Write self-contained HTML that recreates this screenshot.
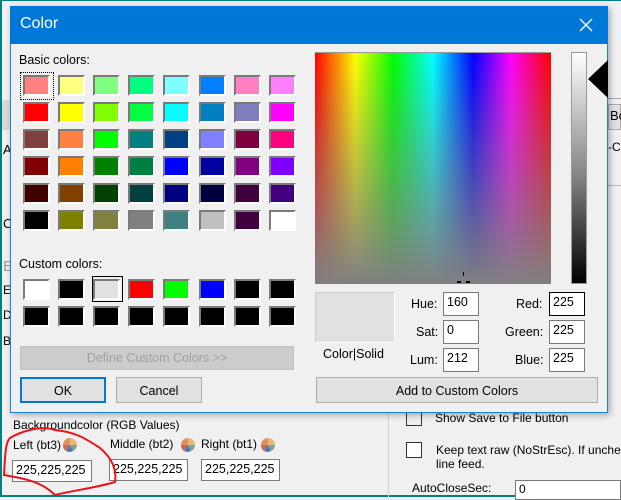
<!DOCTYPE html>
<html><head><style>
*{margin:0;padding:0;box-sizing:border-box}
body{width:621px;height:497px;overflow:hidden;background:#f0f0f0;font-family:"Liberation Sans",sans-serif;position:relative;font-size:12px;color:#000}
.a{position:absolute}
.sw{position:absolute;width:27px;height:21px;border:2px solid;border-color:#7a7a7a #fff #fff #7a7a7a}
.lbl{position:absolute;font-size:12px}
.inp{position:absolute;background:#fff;border:1px solid #7a7a7a;font-size:12.5px;padding:2px 0 0 3px}
.btn{position:absolute;background:#e1e1e1;border:1px solid #adadad;text-align:center;font-size:12.5px}
</style></head><body>
<div class="a" style="left:0;top:0;width:621px;height:497px;border:2px solid #008080;border-top:1px solid #008080;border-right:none"></div>
<div class="a" style="left:2px;top:100px;width:8px;height:30px;background:#d8d8d8"></div>
<div class="a" style="left:3px;top:142px;font-size:13px">A</div>
<div class="a" style="left:3px;top:216px;font-size:13px">C</div>
<div class="a" style="left:3px;top:258px;font-size:15px;color:#999">E</div>
<div class="a" style="left:3px;top:283px;font-size:12px">E</div>
<div class="a" style="left:3px;top:308px;font-size:12px">D</div>
<div class="a" style="left:3px;top:334px;font-size:12px">B</div>
<div class="a" style="left:608px;top:98px;width:13px;height:1px;background:#aaa"></div>
<div class="a" style="left:608px;top:104px;width:13px;height:26px;background:#e1e1e1;border:1px solid #adadad;font-size:13px;padding:3px 0 0 1px">Bo</div>
<div class="a" style="left:608px;top:140px;font-size:12px">-C</div>
<div class="a" style="left:608px;top:185px;width:13px;height:1px;background:#bbb"></div>
<div class="a" style="left:388px;top:412px;width:1px;height:85px;background:#d0d0d0"></div>
<div class="a" style="left:406px;top:410px;width:16px;height:16px;border:1px solid #333;background:#eee"></div>
<div class="lbl" style="left:435px;top:411px">Show Save to File button</div>
<div class="a" style="left:406px;top:442px;width:16px;height:16px;border:1px solid #333;background:#fff"></div>
<div class="lbl" style="left:436px;top:443px;white-space:nowrap">Keep text raw (NoStrEsc). If unche</div>
<div class="lbl" style="left:436px;top:457px">line feed.</div>
<div class="lbl" style="left:412px;top:481px">AutoCloseSec:</div>
<div class="a" style="left:515px;top:480px;width:106px;height:20px;background:#fff;border:1px solid #7a7a7a;font-size:12px;padding:1px 3px">0</div>
<div class="lbl" style="left:13px;top:418px">Backgroundcolor (RGB Values)</div>
<div class="lbl" style="left:13px;top:438px">Left (bt3)</div>
<div class="lbl" style="left:110px;top:437px">Middle (bt2)</div>
<div class="lbl" style="left:201px;top:437px">Right (bt1)</div>
<svg class="a" style="left:62px;top:437px" width="16" height="16" viewBox="0 0 16 16"><path d="M8 8L8 1A7 7 0 0 1 15 8Z" fill="#e8b878"/><path d="M8 8L15 8A7 7 0 0 1 11 14Z" fill="#7aa888"/><path d="M8 8L11 14A7 7 0 0 1 4 14Z" fill="#4a78b8"/><path d="M8 8L4 14A7 7 0 0 1 1 8Z" fill="#d06848"/><path d="M8 8L1 8A7 7 0 0 1 8 1Z" fill="#e09060"/></svg>
<svg class="a" style="left:180px;top:437px" width="16" height="16" viewBox="0 0 16 16"><path d="M8 8L8 1A7 7 0 0 1 15 8Z" fill="#e8b878"/><path d="M8 8L15 8A7 7 0 0 1 11 14Z" fill="#7aa888"/><path d="M8 8L11 14A7 7 0 0 1 4 14Z" fill="#4a78b8"/><path d="M8 8L4 14A7 7 0 0 1 1 8Z" fill="#d06848"/><path d="M8 8L1 8A7 7 0 0 1 8 1Z" fill="#e09060"/></svg>
<svg class="a" style="left:260px;top:437px" width="16" height="16" viewBox="0 0 16 16"><path d="M8 8L8 1A7 7 0 0 1 15 8Z" fill="#e8b878"/><path d="M8 8L15 8A7 7 0 0 1 11 14Z" fill="#7aa888"/><path d="M8 8L11 14A7 7 0 0 1 4 14Z" fill="#4a78b8"/><path d="M8 8L4 14A7 7 0 0 1 1 8Z" fill="#d06848"/><path d="M8 8L1 8A7 7 0 0 1 8 1Z" fill="#e09060"/></svg>
<div class="inp" style="left:12px;top:460px;width:80px;height:22px">225,225,225</div>
<div class="inp" style="left:109px;top:459px;width:79px;height:22px">225,225,225</div>
<div class="inp" style="left:201px;top:459px;width:79px;height:22px">225,225,225</div>
<svg class="a" style="left:0;top:420px" width="130" height="77"><path d="M55 10C40 5 20 12 10 18 5 22 5 40 4 55 20 58 40 60 55 75 75 70 95 68 115 62 117 50 112 38 100 28 85 18 75 12 55 10Z" fill="none" stroke="#e8141c" stroke-width="2"/></svg>

<div class="a" style="left:10px;top:6px;width:598px;height:407px;background:#f0f0f0;border:1px solid #1883d7;box-shadow:2px 2px 6px rgba(0,0,0,.3)"></div>
<div class="a" style="left:10px;top:6px;width:598px;height:38px;background:#0078d7"></div>
<div class="a" style="left:20px;top:15px;color:#fff;font-size:16px">Color</div>
<svg class="a" style="left:579px;top:18px" width="14" height="14"><path d="M1 1L13 13M13 1L1 13" stroke="#fff" stroke-width="1.3"/></svg>
<div class="lbl" style="left:19px;top:53px;font-size:12.5px">Basic colors:</div>
<div class="a" style="left:20px;top:72px;width:34px;height:28px;border:1px dotted #000"></div>
<div id="basic"></div>
<div class="lbl" style="left:19px;top:257px;font-size:12.5px">Custom colors:</div>
<div class="a" style="left:92px;top:276px;width:31px;height:26px;border:1px solid #000"></div>
<div id="custom"></div>
<div class="btn" style="left:20px;top:346px;width:274px;height:24px;color:#a0a0a0;background:#cccccc;border-color:#bfbfbf;padding-top:4px">Define Custom Colors &gt;&gt;</div>
<div class="btn" style="left:20px;top:377px;width:86px;height:26px;border:2px solid #0078d7;padding-top:5px">OK</div>
<div class="btn" style="left:116px;top:377px;width:86px;height:26px;padding-top:6px">Cancel</div>
<div class="a" style="left:315px;top:52px;width:236px;height:232px;border-top:1px solid #999;background:linear-gradient(to bottom,rgba(128,128,128,0),rgba(128,128,128,1)),linear-gradient(to right,#f00,#ff0 17%,#0f0 33%,#0ff 50%,#00f 67%,#f0f 83%,#f00)"></div>
<div class="a" style="left:463px;top:272px;width:1px;height:4px;background:#000"></div>
<div class="a" style="left:457px;top:281px;width:4px;height:2px;background:#000"></div>
<div class="a" style="left:466px;top:281px;width:4px;height:2px;background:#000"></div>
<div class="a" style="left:571px;top:52px;width:16px;height:232px;border:1px solid #999;background:linear-gradient(#fff,#808080 55%,#000)"></div>
<svg class="a" style="left:588px;top:60px" width="20" height="38"><path d="M20 0L0 19L20 38Z" fill="#000"/></svg>
<div class="a" style="left:315px;top:292px;width:80px;height:51px;background:#e1e1e1;border:1px solid #ccc;border-right-color:#fff;border-bottom-color:#fff"></div>
<div class="lbl" style="left:323px;top:347px;font-size:12.5px">Color|Solid</div>
<div class="lbl" style="left:411px;top:297px;font-size:12.5px">Hue:</div>
<div class="lbl" style="left:416px;top:325px;font-size:12.5px">Sat:</div>
<div class="lbl" style="left:410px;top:353px;font-size:12.5px">Lum:</div>
<div class="lbl" style="left:516px;top:297px;font-size:12.5px">Red:</div>
<div class="lbl" style="left:505px;top:325px;font-size:12.5px">Green:</div>
<div class="lbl" style="left:515px;top:353px;font-size:12.5px">Blue:</div>
<div class="inp" style="left:443px;top:292px;width:36px;height:24px">160</div>
<div class="inp" style="left:443px;top:320px;width:36px;height:24px">0</div>
<div class="inp" style="left:443px;top:348px;width:36px;height:24px">212</div>
<div class="inp" style="left:549px;top:292px;width:36px;height:24px;border-color:#000">225</div>
<div class="inp" style="left:549px;top:320px;width:36px;height:24px">225</div>
<div class="inp" style="left:549px;top:348px;width:36px;height:24px">225</div>
<div class="btn" style="left:316px;top:377px;width:282px;height:26px;padding-top:6px">Add to Custom Colors</div>
<script>
var b=[["#ff8080","#ffff80","#80ff80","#00ff80","#80ffff","#0080ff","#ff80c0","#ff80ff"],
["#ff0000","#ffff00","#80ff00","#00ff40","#00ffff","#0080c0","#8080c0","#ff00ff"],
["#804040","#ff8040","#00ff00","#008080","#004080","#8080ff","#800040","#ff0080"],
["#800000","#ff8000","#008000","#008040","#0000ff","#0000a0","#800080","#8000ff"],
["#400000","#804000","#004000","#004040","#000080","#000040","#400040","#400080"],
["#000000","#808000","#808040","#808080","#408080","#c0c0c0","#400040","#ffffff"]];
var h="";
b.forEach(function(r,i){r.forEach(function(c,j){h+='<div class="sw" style="left:'+(23+j*35.1)+'px;top:'+(75+i*27)+'px;background:'+c+'"></div>';});});
document.getElementById("basic").outerHTML=h;
var c=[["#ffffff","#000","#e1e1e1","#ff0000","#00ff00","#0000ff","#000","#000"],["#000","#000","#000","#000","#000","#000","#000","#000"]];
h="";
c.forEach(function(r,i){r.forEach(function(col,j){h+='<div class="sw" style="left:'+(23+j*35.1)+'px;top:'+(279+i*27)+'px;background:'+col+'"></div>';});});
document.getElementById("custom").outerHTML=h;
</script>
</body></html>
